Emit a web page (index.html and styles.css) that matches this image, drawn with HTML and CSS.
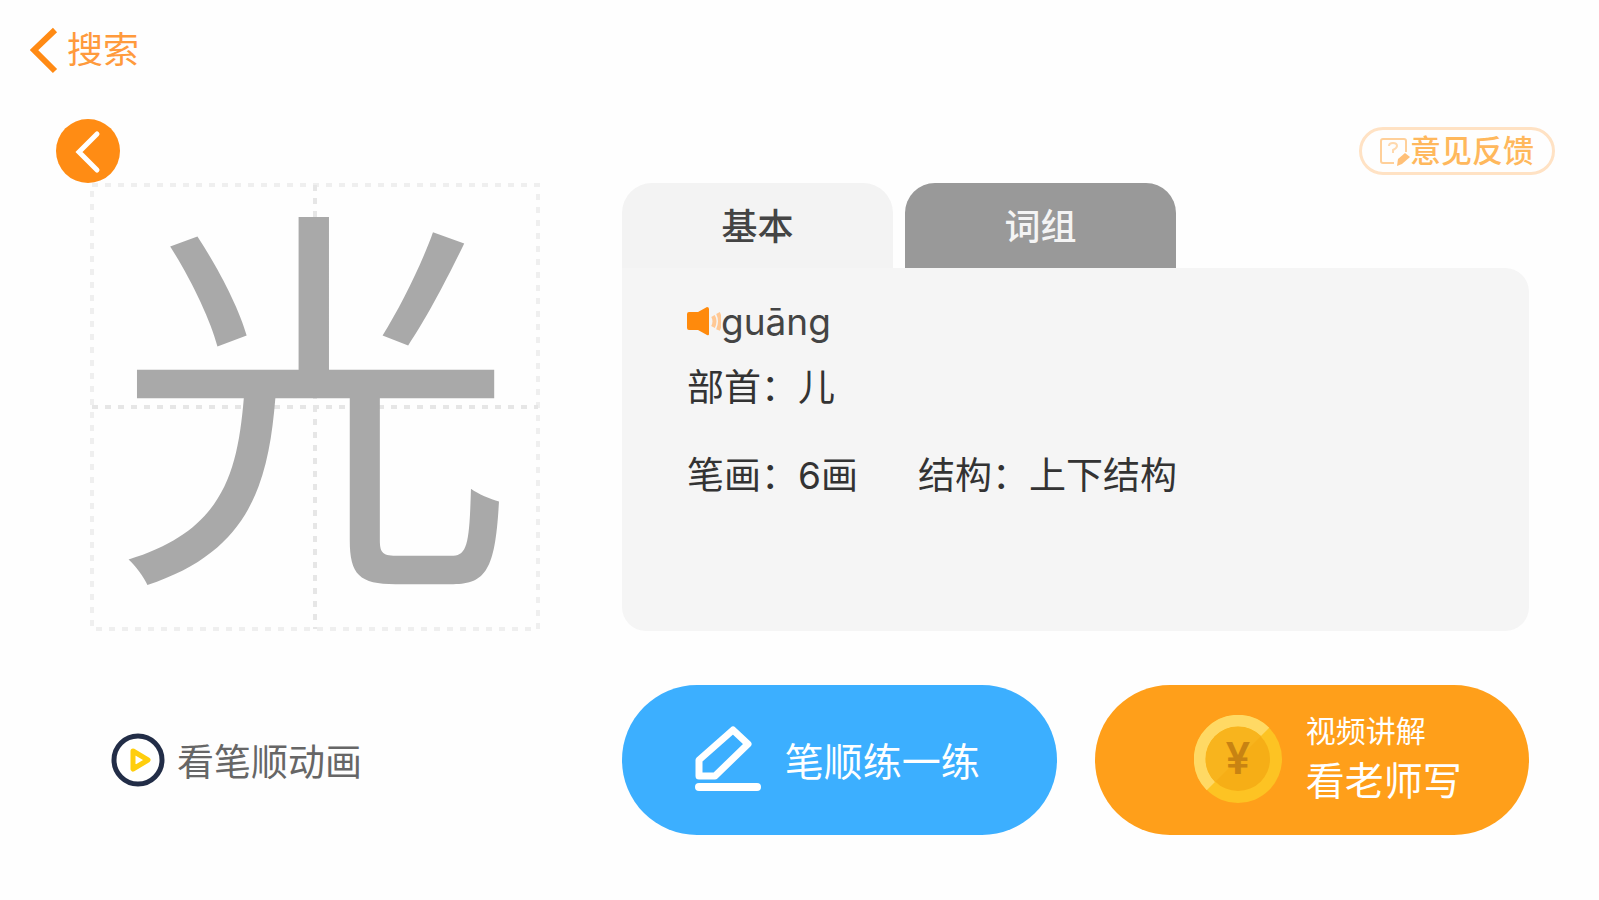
FILE: index.html
```html
<!DOCTYPE html>
<html lang="zh-CN">
<head>
    <meta charset="UTF-8">
    <meta name="viewport" content="width=device-width, initial-scale=1.0">
    <title>搜索</title>
    <link rel="stylesheet" href="styles.css">
</head>
<body>
<header class="header">
    <a class="header-back" href="#">
        <svg width="28" height="48" viewBox="0 0 28 48" aria-hidden="true">
            <path d="M25 4L4 24l21 21" fill="none" stroke="#ff8a14" stroke-width="6"/>
        </svg>
        <span>搜索</span>
    </a>
</header>

<div class="toolbar">
    <button class="prev-button" type="button" aria-label="上一个">
        <svg width="64" height="64" viewBox="0 0 64 64" aria-hidden="true">
            <path d="M41 15L23 33l18 18" fill="none" stroke="#fff" stroke-width="5" stroke-linecap="round"/>
        </svg>
    </button>
    <button class="feedback-button" type="button">
        <svg width="32" height="34" viewBox="0 0 32 34" aria-hidden="true">
            <path d="M16 29H5q-2 0-2-2V7q0-2 2-2h21q2 0 2 2v11" fill="none" stroke="#ffd09a" stroke-width="2"/>
            <path d="M11 12q0-3 4-3t4 3q0 2-4 4v3" fill="none" stroke="#ffd9ae" stroke-width="2"/>
            <path d="M19 32l1-7 7-6 5 4-8 7z" fill="#ffc078"/>
        </svg>
        <span>意见反馈</span>
    </button>
</div>

<main class="content">
    <!-- 田字格 -->
    <div class="char-box">
        <svg class="char-grid" viewBox="0 0 450 448" aria-hidden="true">
            <g fill="none" stroke-width="4" stroke-dasharray="6 7">
                <rect x="2" y="2" width="446" height="444" stroke="#efefef"/>
                <path d="M2 224h446M225 2v444" stroke="#e6e6e6"/>
            </g>
        </svg>
        <span class="char">光</span>
    </div>

    <section class="info">
        <div class="tabs" role="tablist">
            <button class="tab active" type="button" role="tab" aria-selected="true">基本</button>
            <button class="tab" type="button" role="tab" aria-selected="false">词组</button>
        </div>
        <div class="panel" role="tabpanel">
            <div class="pinyin">
                <button class="sound-button" type="button" aria-label="播放读音">
                    <svg width="34" height="32" viewBox="0 0 34 32" aria-hidden="true">
                        <path d="M2 6h9l9-5q2 0 2 2v25q0 2-2 1l-9-5H2q-2 0-2-2V8q0-2 2-2z" fill="#ff8a0c"/>
                        <path d="M26 10q3 5 0 11M31 7q4 8 0 17" fill="none" stroke="#ffc894" stroke-width="4"/>
                    </svg>
                </button>
                <span>guāng</span>
            </div>
            <div class="row">
                <span>部首：儿</span>
            </div>
            <div class="row row-last">
                <span>笔画：6画</span>
                <span>结构：上下结构</span>
            </div>
        </div>
    </section>

    <button class="animation-button" type="button">
        <svg width="54" height="54" viewBox="0 0 54 54" aria-hidden="true">
            <circle cx="27" cy="27" r="24" fill="#fff" stroke="#222d47" stroke-width="5"/>
            <path d="M22 18l15 9-15 9z" fill="none" stroke="#ffce0d" stroke-width="5" stroke-linejoin="round"/>
        </svg>
        <span>看笔顺动画</span>
    </button>

    <div class="actions">
        <button class="action practice" type="button">
            <svg width="66" height="68" viewBox="0 0 66 68" aria-hidden="true">
                <path d="M4 51V35L38 5l15 14-33 32z" fill="none" stroke="#fff" stroke-width="7" stroke-linejoin="round"/>
                <path d="M4 62h58" stroke="#fff" stroke-width="8" stroke-linecap="round"/>
            </svg>
            <span>笔顺练一练</span>
        </button>
        <button class="action video" type="button">
            <svg width="88" height="88" viewBox="0 0 88 88" aria-hidden="true">
                <circle cx="44" cy="44" r="44" fill="#fdc323"/>
                <path d="M17 71A38 38 0 0 1 71 17" fill="none" stroke="#ffd964" stroke-width="12"/>
                <circle cx="44" cy="44" r="32" fill="#f6ae16"/>
                <path d="M21 67A32 32 0 0 1 67 21z" fill="#f8b41d"/>
                <text class="coin-text" x="44" y="59" text-anchor="middle">¥</text>
            </svg>
            <span class="video-text">
                <small>视频讲解</small>
                <span>看老师写</span>
            </span>
        </button>
    </div>
</main>
</body>
</html>
```

FILE: styles.css
```css
* {
    box-sizing: border-box;
}

body {
    margin: 0;
    background-color: #fefefe;
    color: #333;
    font-family: Inter, "Noto Sans CJK SC", sans-serif;
}

button {
    margin: 0;
    padding: 0;
    border: none;
    background: none;
    color: inherit;
    font: inherit;
    cursor: pointer;
}

svg {
    display: block;
    flex-shrink: 0;
}

/* 顶部返回 */
.header {
    display: flex;
    padding: 26px 30px 0;
}

.header-back {
    display: flex;
    align-items: center;
    gap: 9px;
    color: #ff9a3c;
    font-size: 36px;
    line-height: 48px;
    text-decoration: none;
}

.toolbar {
    display: flex;
    align-items: center;
    justify-content: space-between;
    padding: 45px 44px 0 56px;
}

.prev-button {
    border-radius: 50%;
    background-color: #ff8c14;
}

.feedback-button {
    display: flex;
    align-items: center;
    justify-content: center;
    width: 196px;
    height: 48px;
    padding-right: 2px;
    border: 3px solid #ffe2c4;
    border-radius: 24px;
    color: #ffb85c;
    font-size: 31px;
    font-weight: 500;
    line-height: 40px;
}

/* 主体 */
.content {
    display: grid;
    grid-template-columns: 450px 1fr;
    column-gap: 82px;
    row-gap: 54px;
    padding: 0 70px 40px 90px;
}

.char-box {
    display: grid;
    place-items: center;
    height: 448px;
}

.char-grid,
.char {
    grid-area: 1 / 1;
}

.char-grid {
    width: 100%;
}

.char {
    color: #a9a9a9;
    font-size: 400px;
    line-height: 448px;
}

.info {
    display: flex;
    flex-direction: column;
}

.tabs {
    display: flex;
    gap: 12px;
}

.tab {
    width: 271px;
    height: 85px;
    padding-bottom: 4px;
    border-radius: 30px 30px 0 0;
    background-color: #999;
    color: #f4f4f4;
    font-size: 36px;
    font-weight: 500;
}

.tab.active {
    background-color: #f3f3f3;
    color: #444;
}

.panel {
    flex: 1;
    padding: 32px 65px;
    border-radius: 0 24px 24px 24px;
    background-color: #f5f5f5;
    font-size: 37px;
    line-height: 44px;
}

.pinyin {
    display: flex;
    align-items: center;
    color: #444;
}

.row {
    display: flex;
    gap: 60px;
    margin-top: 22px;
}

.row-last {
    margin-top: 44px;
}

/* 底部按钮 */
.animation-button {
    display: flex;
    align-items: center;
    gap: 12px;
    justify-self: start;
    padding-left: 21px;
    color: #666;
    font-size: 37px;
}

.actions {
    display: grid;
    grid-template-columns: 1fr 1fr;
    gap: 38px;
}

.action {
    display: flex;
    align-items: center;
    justify-content: center;
    gap: 24px;
    height: 150px;
    padding-bottom: 2px;
    border-radius: 75px;
    color: #fff;
    font-size: 39px;
}

.practice {
    padding-right: 4px;
    background-color: #3cafff;
}

.video {
    padding-left: 32px;
    background-color: #ff9f1a;
}

.coin-text {
    fill: #c88312;
    font-size: 44px;
    font-weight: 600;
}

.video-text {
    display: flex;
    flex-direction: column;
    text-align: left;
    line-height: 56px;
}

.video-text small {
    font-size: 30px;
    line-height: 44px;
}
```
